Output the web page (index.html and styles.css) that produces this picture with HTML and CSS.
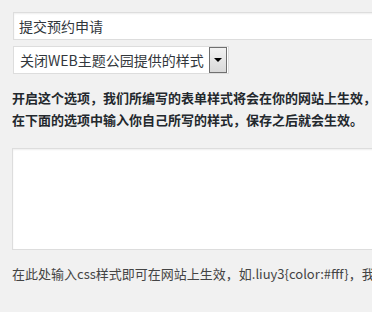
FILE: index.html
```html
<!DOCTYPE html>
<html lang="zh-CN">
<head>
<meta charset="utf-8">
<title>表单样式设置</title>
<link rel="stylesheet" href="styles.css">
</head>
<body>
<div class="panel">
  <input class="text-input" type="text" value="提交预约申请">
  <div class="select-box">
    <span class="select-value">关闭WEB主题公园提供的样式</span>
    <span class="select-btn"><span class="arrow"></span></span>
  </div>
  <p class="note">开启这个选项，我们所编写的表单样式将会在你的网站上生效，<br>在下面的选项中输入你自己所写的样式，保存之后就会生效。</p>
  <textarea class="css-area"></textarea>
  <p class="desc">在此处输入css样式即可在网站上生效，如.liuy3{color:#fff}，我们就可以修改表单的颜色</p>
</div>
</body>
</html>
```

FILE: styles.css
```css
html, body {
  margin: 0;
  padding: 0;
  background: #f1f1f1;
  overflow: hidden;
}
body {
  font-family: "Noto Sans CJK SC", "Noto Sans", sans-serif;
  color: #444;
}
.panel {
  padding: 12px 0 0 12px;
  width: 500px;
}
.text-input {
  display: block;
  box-sizing: border-box;
  margin: 0 0 0 1px;
  width: 420px;
  height: 28px;
  padding: 0 5px;
  border: 1px solid #dddddd;
  background: #fff;
  box-shadow: inset 0 1px 2px rgba(0,0,0,0.07);
  font-family: inherit;
  font-size: 14px;
  color: #32373c;
  outline: none;
}
.select-box {
  box-sizing: border-box;
  margin: 6px 0 0 1px;
  width: 216px;
  height: 28px;
  padding: 1px;
  border: 1px solid #dddddd;
  background: #fff;
  display: flex;
  align-items: center;
}
.select-value {
  flex: 1;
  padding-left: 5px;
  font-size: 14px;
  color: #32373c;
  white-space: nowrap;
  overflow: hidden;
}
.select-btn {
  box-sizing: border-box;
  width: 18px;
  height: 26px;
  border: 1px solid #707070;
  background: linear-gradient(#f2f2f2, #d9d9d9);
  display: flex;
  align-items: center;
  justify-content: center;
}
.arrow {
  width: 0;
  height: 0;
  border-left: 4px solid transparent;
  border-right: 4px solid transparent;
  border-top: 4px solid #000;
}
.note {
  margin: 13px 0 0 0;
  font-size: 13px;
  line-height: 22px;
  font-weight: bold;
  color: #23282d;
  white-space: nowrap;
}
.css-area {
  display: block;
  box-sizing: border-box;
  margin: 17px 0 0 0;
  width: 420px;
  height: 102px;
  border: 1px solid #dddddd;
  background: #fff;
  box-shadow: inset 0 1px 2px rgba(0,0,0,0.07);
  resize: none;
  outline: none;
}
.desc {
  margin: 13px 0 0 0;
  font-size: 13px;
  line-height: 22px;
  color: #444;
  white-space: nowrap;
}
```
